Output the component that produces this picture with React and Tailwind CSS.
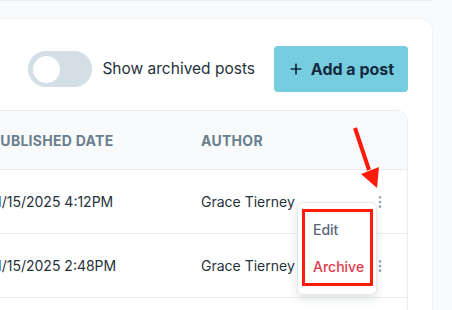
import { EllipsisVertical, Plus } from 'lucide-react'

const rows = [
  { date: '1/15/2025 4:12PM', author: 'Grace Tierney' },
  { date: '1/15/2025 2:48PM', author: 'Grace Tierney' },
  { date: '1/14/2025 9:05AM', author: 'Grace Tierney' },
]

export default function App() {
  return (
    <div className="relative w-[452px] h-[310px] overflow-hidden bg-[#f8fafc] font-['Inter',sans-serif]">
      {/* card above, only its bottom edge shows */}
      <div className="w-[432px] h-[1px] bg-[#e9eef2]" />

      {/* main card */}
      <div className="mt-[18px] ml-[-40px] w-[472px] h-[400px] bg-white rounded-xl shadow-[0_0_0_1px_#f1f4f7] pr-[24px] pt-[27px] pl-[24px]">
        {/* toolbar */}
        <div className="flex items-center justify-end">
          <button className="w-[64px] h-[36px] rounded-full bg-[#d3dee5] flex items-center px-[5px]">
            <span className="w-[27px] h-[27px] rounded-full bg-white" />
          </button>
          <span className="ml-[10px] text-[15.5px] text-[#26323c]">Show archived posts</span>
          <button className="ml-[19px] w-[134px] h-[46px] rounded-[4px] bg-[#76cddf] flex items-center justify-center gap-[7px] text-[16px] font-bold text-[#13293d]">
            <Plus size={16} strokeWidth={2.6} />
            Add a post
          </button>
        </div>

        {/* table */}
        <div className="mt-[18px] rounded-xl border border-[#e8edf1] overflow-hidden">
          <div className="flex items-center h-[59px] bg-[#f8fafc] border-b border-[#e8edf1] text-[14px] font-bold tracking-[0.02em] text-[#6b7f8e]">
            <div className="w-[216px] pl-[6px]">PUBLISHED DATE</div>
            <div className="flex-1">AUTHOR</div>
          </div>
          {rows.map((r, i) => (
            <div key={i} className="flex items-center h-[64px] border-b border-[#e8edf1] text-[14px] text-[#26323c]">
              <div className="w-[216px] pl-[11px]">{r.date}</div>
              <div className="flex-1">{r.author}</div>
              <div className="w-[35px] text-[#9aa6b0]">
                <EllipsisVertical size={16} strokeWidth={2} />
              </div>
            </div>
          ))}
        </div>
      </div>

      {/* open row menu */}
      <div className="absolute left-[297px] top-[202px] w-[80px] h-[93px] bg-white rounded-md border border-[#e4e9ee] shadow-[0_4px_10px_rgba(15,30,45,0.12)] flex flex-col pt-[16px] pl-[15px] gap-[16px] text-[14px] leading-[21px]">
        <span className="text-[#576878] font-medium">Edit</span>
        <span className="text-[#e23b4e] font-medium">Archive</span>
      </div>

      {/* annotation */}
      <div className="absolute left-[302px] top-[209px] w-[71px] h-[77px] border-[3px] border-[#ff1a0a]" />
      <svg className="absolute left-0 top-0" width="452" height="310">
        <line x1="355" y1="128" x2="369" y2="170" stroke="#ff1a0a" strokeWidth="4" />
        <polygon points="361,174 379,167 377,188" fill="#ff1a0a" />
      </svg>
    </div>
  )
}
